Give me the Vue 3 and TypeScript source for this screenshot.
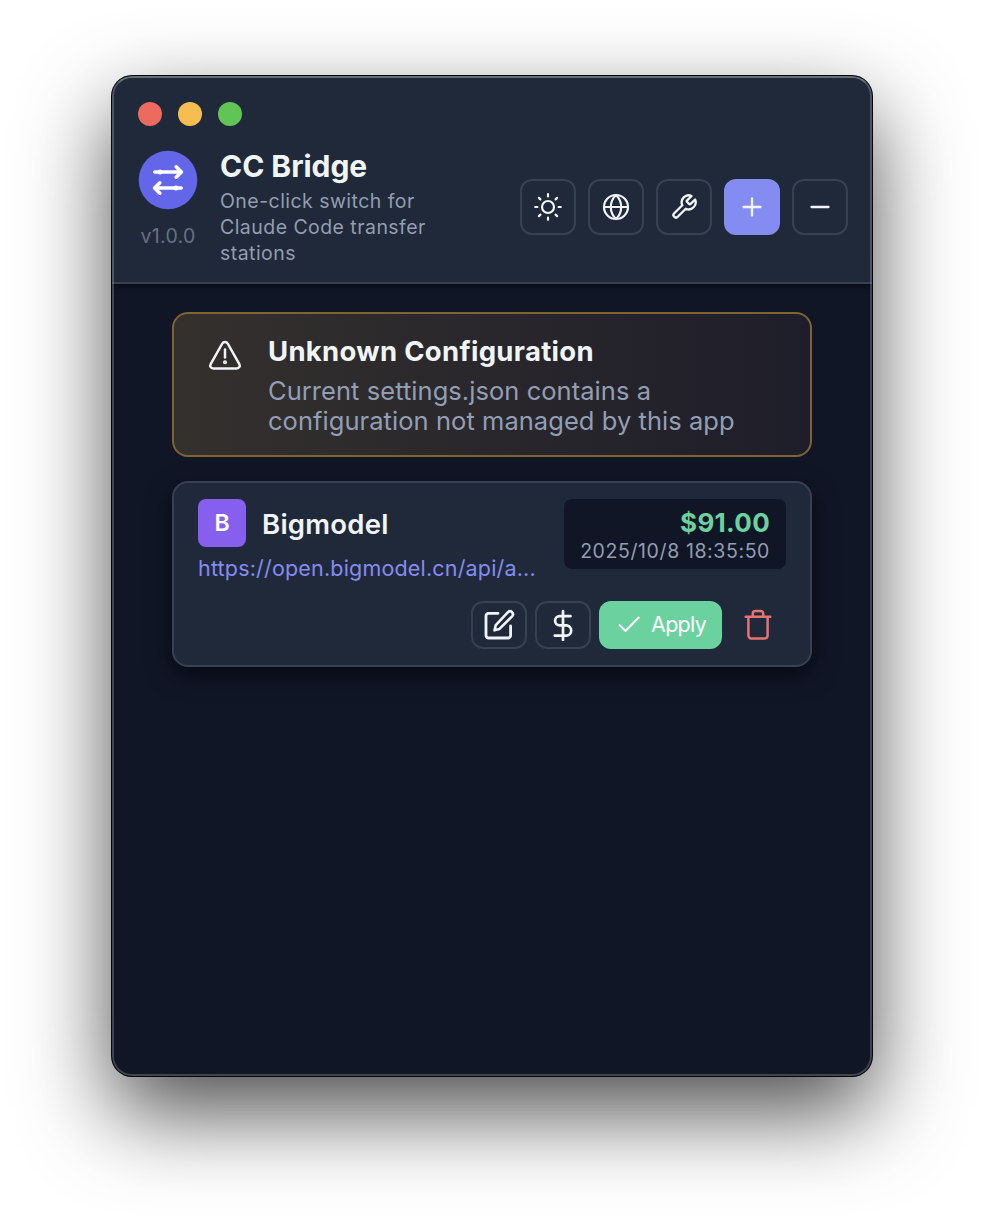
<script setup lang="ts">
import { ref } from 'vue'

interface Station {
  name: string
  url: string
  balance: string
  checkedAt: string
}

const version = 'v1.0.0'
const stations = ref<Station[]>([
  {
    name: 'Bigmodel',
    url: 'https://open.bigmodel.cn/api/a...',
    balance: '$91.00',
    checkedAt: '2025/10/8 18:35:50',
  },
])
</script>

<template>
  <div class="desktop">
    <div class="window">
      <header class="header">
        <div class="lights">
          <span class="light red"></span>
          <span class="light yellow"></span>
          <span class="light green"></span>
        </div>
        <div class="bar">
          <div class="brand">
            <svg class="logo" viewBox="0 0 60 60">
              <circle cx="30" cy="30" r="29.3" fill="#6366e9" />
              <g fill="none" stroke="#fff" stroke-width="3.6" stroke-linecap="round" stroke-linejoin="round">
                <path d="M16.8 22H43M38.2 16.8L43.4 22L38.2 27.2" />
                <path d="M43.2 38H17M21.8 32.8L16.6 38L21.8 43.2" />
              </g>
              <circle cx="22" cy="22" r="2.5" fill="#fff" />
              <circle cx="38" cy="38" r="2.5" fill="#fff" />
            </svg>
            <span class="version">{{ version }}</span>
          </div>
          <div class="titles">
            <h1>CC Bridge</h1>
            <p>One-click switch for<br />Claude Code transfer<br />stations</p>
          </div>
          <div class="tools">
            <button class="tool" aria-label="Theme">
              <svg viewBox="0 0 28 28" stroke-width="2.2">
                <circle cx="14" cy="14" r="6" />
                <path d="M14 1.2v2.2M14 24.6V26.8M1.2 14h2.2M24.6 14H26.8M4.9 4.9l1.5 1.5M21.6 21.6l1.5 1.5M4.9 23.1l1.5-1.5M21.6 6.4l1.5-1.5" />
              </svg>
            </button>
            <button class="tool" aria-label="Language">
              <svg viewBox="0 0 28 28" stroke-width="2.2">
                <circle cx="14" cy="14" r="12" />
                <path d="M2 14h24M14 2c3.6 3.4 5.2 7.4 5.2 12S17.6 22.6 14 26C10.4 22.6 8.8 18.6 8.8 14S10.4 5.4 14 2z" />
              </svg>
            </button>
            <button class="tool" aria-label="Settings">
              <svg viewBox="0 0 24 24" stroke-width="2">
                <path d="M14.7 6.3a1 1 0 0 0 0 1.4l1.6 1.6a1 1 0 0 0 1.4 0l3.77-3.77a6 6 0 0 1-7.94 7.94l-6.91 6.91a2.12 2.12 0 0 1-3-3l6.91-6.91a6 6 0 0 1 7.94-7.94l-3.76 3.76z" />
              </svg>
            </button>
            <button class="tool primary" aria-label="Add">
              <svg viewBox="0 0 28 28" stroke-width="2.3">
                <path d="M14 5.5v17M5.5 14h17" />
              </svg>
            </button>
            <button class="tool" aria-label="Minimize">
              <svg viewBox="0 0 28 28" stroke-width="2.3">
                <path d="M5.5 14h17" />
              </svg>
            </button>
          </div>
        </div>
      </header>

      <main class="content">
        <section class="alert">
          <svg class="warn" viewBox="0 0 34 32">
            <path d="M14.3 3.5a3.1 3.1 0 0 1 5.4 0l11.5 20.3c1.3 2.3.2 4.7-2.7 4.7h-23c-2.900 0-4-2.4-2.700-4.7z" />
            <path d="M17 9.500v8" />
            <circle cx="17" cy="22.2" r="0.8" />
          </svg>
          <div class="alert-text">
            <h2>Unknown Configuration</h2>
            <p>Current settings.json contains a<br />configuration not managed by this app</p>
          </div>
        </section>

        <article v-for="station in stations" :key="station.name" class="card">
          <div class="card-top">
            <div class="info">
              <div class="name-row">
                <span class="avatar">{{ station.name.charAt(0) }}</span>
                <h3>{{ station.name }}</h3>
              </div>
              <a class="url">{{ station.url }}</a>
            </div>
            <div class="balance">
              <strong>{{ station.balance }}</strong>
              <time>{{ station.checkedAt }}</time>
            </div>
          </div>
          <div class="actions">
            <button class="action" aria-label="Edit">
              <svg viewBox="0 0 32 32" stroke-width="2.8">
                <path d="M15 4.3H5.6a2.6 2.6 0 0 0-2.6 2.6V26.4a2.6 2.6 0 0 0 2.6 2.6H25a2.6 2.6 0 0 0 2.6-2.6V17" />
                <path stroke-width="2.6" d="M25 3.2a2.9 2.9 0 0 1 4.1 4.1L16.5 19.9l-5 1.400 1.3-5.2z" />
              </svg>
            </button>
            <button class="action" aria-label="Balance">
              <svg viewBox="0 0 32 32" stroke-width="2.7">
                <path d="M16 2v29M23.5 7.2h-10.8a4.6 4.6 0 0 0 0 9.2h7a5.2 5.2 0 0 1 0 10.3H7.8" />
              </svg>
            </button>
            <button class="apply">
              <svg viewBox="0 0 24 24"><path d="M2.5 13l6 6L21.7 5.5" /></svg>
              <span>Apply</span>
            </button>
            <button class="delete" aria-label="Delete">
              <svg viewBox="0 0 28 32">
                <path d="M1.7 7.7h24.600M4.4 7.7V26.6a2.8 2.8 0 0 0 2.8 2.8h13.6a2.8 2.8 0 0 0 2.8-2.8V7.7M8.8 7V4.6a2.5 2.5 0 0 1 2.5-2.5h5.4a2.5 2.5 0 0 1 2.5 2.5V7" />
              </svg>
            </button>
          </div>
        </article>
      </main>
    </div>
  </div>
</template>

<style>
body {
  margin: 0;
  background: #fff;
}
</style>

<style scoped>
* {
  box-sizing: border-box;
}
h1,
h2,
h3,
p {
  margin: 0;
}
button {
  padding: 0;
  font: inherit;
}
svg {
  display: block;
  flex: none;
}
.desktop {
  height: 1224px;
  padding: 76px 112px 148px;
  overflow: hidden;
  background: #fff;
  font-family: Inter, 'Liberation Sans', sans-serif;
  color: #f1f5f9;
}
.window {
  position: relative;
  height: 1000px;
  overflow: hidden;
  border-radius: 20px;
  background: #111627;
  box-shadow: 0 0 0 1px #05070b, 0 36px 88px rgba(0, 0, 0, 0.7);
}
.window::after {
  content: '';
  position: absolute;
  inset: 0;
  border: 2px solid rgba(255, 255, 255, 0.2);
  border-top-color: rgba(255, 255, 255, 0.32);
  border-radius: 20px;
  pointer-events: none;
}
.header {
  height: 208px;
  padding: 26px 24px 0 26px;
  border-bottom: 2px solid #364152;
  background: #202939;
  box-shadow: 0 2px 6px rgba(0, 0, 0, 0.55);
}
.lights {
  display: flex;
  gap: 16px;
}
.light {
  width: 24px;
  height: 24px;
  border-radius: 50%;
}
.red {
  background: #ed6a5f;
}
.yellow {
  background: #f6be50;
}
.green {
  background: #61c555;
}
.bar {
  display: flex;
  align-items: flex-start;
  margin-top: 24px;
}
.brand {
  display: flex;
  flex-direction: column;
  align-items: center;
  width: 60px;
}
.logo {
  width: 60px;
  height: 60px;
}
.version {
  margin-top: 14px;
  font-size: 19.5px;
  line-height: 24px;
  letter-spacing: 0.3px;
  color: #667181;
}
.titles {
  margin-left: 22px;
  width: 300px;
  white-space: nowrap;
}
h1 {
  font-size: 30px;
  line-height: 32px;
  font-weight: 700;
  letter-spacing: -0.05px;
}
.titles p {
  margin-top: 6px;
  font-size: 19.5px;
  line-height: 26px;
  letter-spacing: 0.45px;
  color: #929eb0;
}
.tools {
  display: flex;
  gap: 12px;
  margin-top: 29px;
}
.tool {
  display: flex;
  align-items: center;
  justify-content: center;
  width: 56px;
  height: 56px;
  border: 2px solid #364152;
  border-radius: 12px;
  background: transparent;
}
.tool svg {
  width: 28px;
  height: 28px;
  fill: none;
  stroke: #f1f5f9;
  stroke-linecap: round;
  stroke-linejoin: round;
}
.primary {
  border-color: #848cf2;
  background: #848cf2;
}
.content {
  display: flex;
  flex-direction: column;
  gap: 24px;
  padding: 28px 60px 0;
}
.alert {
  display: flex;
  height: 145px;
  padding: 20px 34px 0;
  border: 2px solid #7e6333;
  border-radius: 16px;
  background: linear-gradient(90deg, #34302d, #1e1e2a);
}
.warn {
  width: 34px;
  height: 32px;
  margin-top: 6px;
  fill: none;
  stroke: #f1f5f9;
  stroke-width: 2.5;
  stroke-linecap: round;
  stroke-linejoin: round;
}
.alert-text {
  margin-left: 26px;
  white-space: nowrap;
}
h2 {
  font-size: 27.5px;
  line-height: 34px;
  font-weight: 700;
  letter-spacing: 0.3px;
}
.alert p {
  margin-top: 8px;
  font-size: 25.5px;
  line-height: 30px;
  letter-spacing: 0.05px;
  color: #929eb4;
}
.card {
  height: 186px;
  padding: 16px 24px 0;
  border: 2px solid #364152;
  border-radius: 16px;
  background: #202939;
  box-shadow: 0 8px 24px rgba(0, 0, 0, 0.6);
}
.card-top {
  display: flex;
  justify-content: space-between;
  height: 84px;
}
.name-row {
  display: flex;
  align-items: center;
  gap: 16px;
  height: 48px;
}
.avatar {
  display: flex;
  align-items: center;
  justify-content: center;
  width: 48px;
  height: 48px;
  border-radius: 8px;
  background: #865fee;
  font-size: 23px;
  font-weight: 600;
  color: #fff;
}
h3 {
  padding-top: 2px;
  font-size: 27.5px;
  line-height: 34px;
  font-weight: 600;
  letter-spacing: 0.25px;
}
.url {
  display: block;
  margin-top: 8px;
  font-size: 21.5px;
  line-height: 26px;
  letter-spacing: 0.18px;
  color: #848cf2;
  white-space: nowrap;
}
.balance {
  display: flex;
  flex-direction: column;
  align-items: flex-end;
  width: 222px;
  height: 70px;
  padding: 8px 16px 0;
  border-radius: 8px;
  background: #111627;
  white-space: nowrap;
}
.balance strong {
  font-size: 26px;
  line-height: 32px;
  font-weight: 700;
  letter-spacing: 0.3px;
  color: #6bd29f;
}
.balance time {
  font-size: 19.5px;
  line-height: 24px;
  letter-spacing: 0.6px;
  color: #929eb0;
}
.actions {
  display: flex;
  justify-content: flex-end;
  gap: 8px;
  margin-top: 18px;
}
.action {
  display: flex;
  align-items: center;
  justify-content: center;
  width: 56px;
  height: 48px;
  border: 2px solid #364152;
  border-radius: 12px;
  background: transparent;
}
.action svg {
  width: 32px;
  height: 32px;
  fill: none;
  stroke: #f1f5f9;
  stroke-linecap: round;
  stroke-linejoin: round;
}
.apply {
  display: flex;
  align-items: center;
  gap: 10px;
  width: 123px;
  height: 48px;
  padding: 0 0 2px 18px;
  border: 0;
  border-radius: 12px;
  background: #6bd29f;
  color: #fff;
  font-size: 21.5px;
  line-height: 26px;
  letter-spacing: -0.7px;
}
.apply svg {
  width: 24px;
  height: 24px;
  fill: none;
  stroke: #fff;
  stroke-width: 2;
  stroke-linecap: round;
  stroke-linejoin: round;
}
.delete {
  display: flex;
  align-items: center;
  justify-content: center;
  width: 56px;
  height: 48px;
  border: 0;
  background: transparent;
}
.delete svg {
  width: 28px;
  height: 32px;
  fill: none;
  stroke: #e57373;
  stroke-width: 2.5;
  stroke-linecap: round;
  stroke-linejoin: round;
}
</style>
